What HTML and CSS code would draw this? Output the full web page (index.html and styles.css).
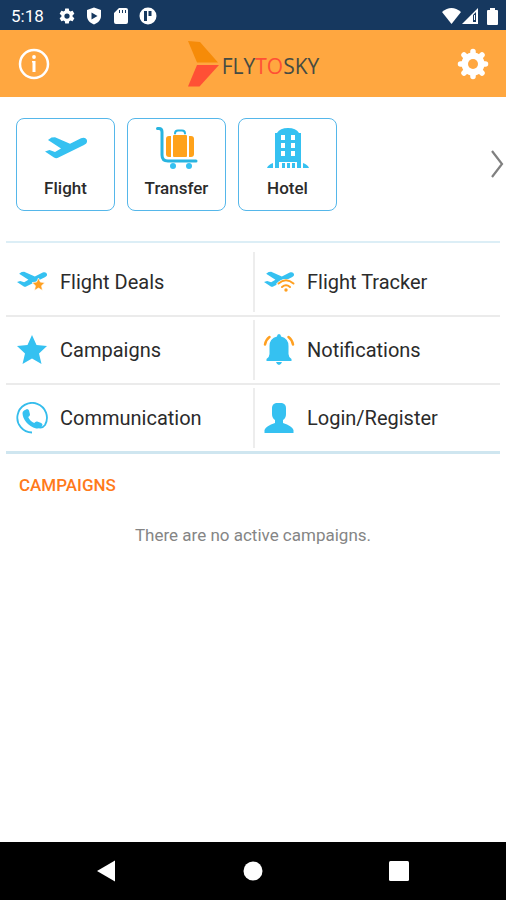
FILE: index.html
```html
<!DOCTYPE html>
<html lang="en">
<head>
<meta charset="utf-8">
<meta name="viewport" content="width=device-width, initial-scale=1">
<title>FlyToSky</title>
<link rel="stylesheet" href="styles.css">
</head>
<body>
<svg class="defs" aria-hidden="true">
  <symbol id="plane" viewBox="0 0 42 22">
    <path d="M0 14.500 4.500 13 10 15 16 11.500 3 3 6.500.500 10 .200 25 6.800 36 1.200C39 0 41.500 1 42 3.500 42.300 6 41 7 39 8L13.500 20.500C12 21.500 10.500 21.500 9 20.500Z"/>
  </symbol>
</svg>
<div class="app">
  <div class="status">
    <span class="clock">5:18</span>
    <svg width="18" height="18" viewBox="0 0 24 24"><path fill-rule="evenodd" d="M19.430 12.980c.04-.32.07-.64.07-.98s-.03-.66-.07-.98l2.110-1.650c.19-.15.24-.42.12-.64l-2-3.460c-.12-.22-.39-.3-.61-.22l-2.490 1c-.52-.4-1.080-.73-1.690-.98l-.38-2.650A.49.490 0 0 0 14 2h-4c-.25 0-.46.180-.49.420l-.38 2.650c-.61.250-1.170.590-1.690.98l-2.490-1c-.23-.09-.49 0-.61.220l-2 3.460c-.13.220-.07.490.12.640l2.110 1.650c-.04.320-.07.650-.07.980s.03.660.07.980l-2.110 1.650c-.19.150-.24.420-.12.640l2 3.460c.12.220.39.300.61.220l2.490-1c.52.400 1.080.730 1.690.980l.38 2.650c.03.240.24.420.49.420h4c.25 0 .46-.18.49-.42l.38-2.650c.61-.25 1.170-.59 1.690-.98l2.490 1c.23.090.49 0 .61-.22l2-3.460c.12-.22.070-.49-.12-.64zM12 15.500a3.500 3.500 0 1 1 0-7 3.500 3.500 0 0 1 0 7z"/></svg>
    <svg width="18" height="18" viewBox="0 0 18 18"><path fill-rule="evenodd" d="M9 .500 16 3v6c0 4-3 7-7 8.500C5 16 2 13 2 9V3ZM6.500 5.500v7l6-3.500Z"/></svg>
    <svg width="18" height="18" viewBox="0 0 18 18"><path fill-rule="evenodd" d="M7 1h7a2 2 0 0 1 2 2v12a2 2 0 0 1-2 2H4a2 2 0 0 1-2-2V6ZM7 3v3h1V3ZM10 3v3h1V3ZM13 3v3h1V3Z"/></svg>
    <svg width="18" height="18" viewBox="0 0 18 18"><path fill-rule="evenodd" d="M9 .500a8.500 8.500 0 1 1 0 17A8.500 8.500 0 0 1 9 .500ZM5 4v10h3V4ZM9.500 4v5h3V4Z"/></svg>
    <span class="signals">
      <svg width="19" height="16" viewBox="0 0 19 16"><path d="M0 4Q9.500-4 19 4L9.500 16Z"/></svg>
      <svg width="16" height="16" viewBox="0 0 16 16"><path fill-rule="evenodd" d="M16 0v16H0ZM11 7v7h3V4Z"/><path d="M12 7h1v5h-1z"/></svg>
      <svg class="battery" width="11" height="17" viewBox="0 0 11 17"><path d="M3 0h5v2h2q1 0 1 1v13q0 1-1 1H1q-1 0-1-1V3q0-1 1-1h2Z"/></svg>
    </span>
  </div>

  <header class="header">
    <button class="icon-btn" aria-label="Information">
      <svg width="32" height="32" viewBox="0 0 32 32"><circle cx="16" cy="16" r="14" fill="none" stroke="#fff" stroke-width="2.500"/><circle cx="16" cy="9" r="1.900"/><path d="M14 13h3.500v11h-3v-9.500H14Z"/></svg>
    </button>
    <h1 class="brand">
      <svg width="31" height="46" viewBox="0 0 31 46" aria-hidden="true"><path fill="#f68b08" d="M0 0 12 1 30 21.500H9Z"/><path fill="#ff5035" d="M9 24H31L11.500 45.500H0Z"/></svg>
      <span class="name">FLY<span class="to">TO</span>SKY</span>
    </h1>
    <button class="icon-btn" aria-label="Settings">
      <svg width="32" height="32" viewBox="0 0 32 32"><g stroke="#fff" stroke-width="5.500" stroke-linecap="round"><path d="M16 3.500v25M3.500 16h25M7 7l18 18M25 7 7 25"/></g><circle cx="16" cy="16" r="11.500"/><circle cx="16" cy="16" r="5" fill="#ffa740"/></svg>
    </button>
  </header>

  <main>
    <nav class="services" aria-label="Services">
      <button class="tile">
        <svg width="48" height="44" viewBox="0 0 48 44" aria-hidden="true"><use href="#plane" x="3" y="11" width="42" height="22"/></svg>
        <span>Flight</span>
      </button>
      <button class="tile">
        <svg width="48" height="44" viewBox="0 0 48 44" aria-hidden="true">
          <g fill="none" stroke="#28b4e0" stroke-linecap="round"><path stroke-width="3" d="M4.500 2.500H6Q9 2.500 9 6V29Q9 35 15 35H43"/><path stroke-width="2" d="M22 7.500q0-3 3-3h4q3 0 3 3"/></g>
          <g fill="#ffa21a"><path d="M18 10v21h-2q-3 0-3-3V13q0-3 3-3Z"/><rect x="20" y="9" width="14" height="22" rx="1"/><path d="M36 10h2q3 0 3 3v15q0 3-3 3h-2Z"/></g>
          <circle cx="20" cy="40" r="3"/><circle cx="36" cy="40" r="3"/>
        </svg>
        <span>Transfer</span>
      </button>
      <button class="tile">
        <svg width="48" height="44" viewBox="0 0 48 44" aria-hidden="true">
          <path fill-rule="evenodd" d="M11 7h2Q16 2 24 2t11 5h2v35h-4v-6H15v6h-4ZM17 9v5h4V9ZM27 9v5h4V9ZM17 17v5h4v-5ZM27 17v5h4v-5ZM17 25v5h4v-5ZM27 25v5h4v-5Z"/>
          <path d="M18 37h3v5h-3zM23 37h3v5h-3zM28 37h3v5h-3zM9 37v5H3q1-3 6-5ZM39 37v5h6q-1-3-6-5Z"/>
        </svg>
        <span>Hotel</span>
      </button>
      <button class="next" aria-label="More services">
        <svg width="14" height="30" viewBox="0 0 14 30"><path fill="none" stroke="#808080" stroke-width="2.200" d="M2 1 12 14 2 27"/></svg>
      </button>
    </nav>

    <nav class="menu" aria-label="Menu">
      <a href="#deals">
        <svg width="32" height="32" viewBox="0 0 32 32" aria-hidden="true"><use href="#plane" x="1" y="5" width="30" height="17"/><path fill="#ffa021" stroke="#fff" stroke-width=".700" d="m22.500 12 1.900 4.100 4.600.500-3.400 3.100.9 4.800-4-2.400-4 2.400.9-4.800-3.400-3.100 4.600-.500Z"/></svg>
        <span>Flight Deals</span>
      </a>
      <a href="#tracker">
        <svg width="32" height="32" viewBox="0 0 32 32" aria-hidden="true"><use href="#plane" x="1" y="5" width="30" height="17"/><path fill="#fff" d="M13 18Q22 8 32 18L23 28Z"/><g fill="none" stroke="#ffa021" stroke-width="2" stroke-linecap="round"><path d="M15.500 17.500q7.500-6.500 15 0M19 21q4-3.500 8 0"/></g><circle cx="23" cy="24" r="1.700" fill="#ffa021"/></svg>
        <span>Flight Tracker</span>
      </a>
      <a href="#campaigns">
        <svg width="32" height="32" viewBox="0 0 32 32" aria-hidden="true"><path d="m16 1 4.500 10L31 12l-8 7.500L25.500 30 16 24.500 6.500 30 9 19.500 1 12l10.500-1Z"/></svg>
        <span>Campaigns</span>
      </a>
      <a href="#notifications">
        <svg width="32" height="32" viewBox="0 0 32 32" aria-hidden="true"><path d="M16 0q2 0 2 2.500 7.500 2 7.500 9.500v8q0 3 3 5v2h-25v-2q3-2 3-5v-8q0-7.500 7.500-9.500Q14 0 16 0ZM13 28h6q-1 3-3 3t-3-3Z"/><g fill="none" stroke="#ffa021" stroke-width="2.500" stroke-linecap="round"><path d="M6.500 3Q3 5.500 2 10.500M25.500 3Q29 5.500 30 10.500"/></g></svg>
        <span>Notifications</span>
      </a>
      <a href="#communication">
        <svg width="32" height="32" viewBox="0 0 32 32" aria-hidden="true"><path fill="none" stroke="#35bdec" stroke-width="1.800" d="M16 30.500A14.800 14.800 0 1 1 29 23q-3 4-7 2"/><path d="M8 8.500 11 7q1.500 0 2 1.500l1 4q0 1.500-1.800 2.500 2 4.500 6 6 1.500-2 3-1.500l4 1.500q2 1 1 3-2 3-6 2.500C12 24.500 6.500 17 6.500 11q0-1.500 1.500-2.500Z"/></svg>
        <span>Communication</span>
      </a>
      <a href="#login">
        <svg width="32" height="32" viewBox="0 0 32 32" aria-hidden="true"><path d="M13 1h6q4 1 4 5v6q0 4-3 6v3q9 3 10.500 7v3h-29v-3Q3 24 12 21v-3q-3-2-3-6V6q0-4 4-5Z"/></svg>
        <span>Login/Register</span>
      </a>
    </nav>

    <section class="campaigns">
      <h2>CAMPAIGNS</h2>
      <p>There are no active campaigns.</p>
    </section>
  </main>

  <footer class="navbar">
    <button aria-label="Back"><svg width="22" height="22" viewBox="0 0 22 22"><path d="M20 .500v21L2 11Z"/></svg></button>
    <button aria-label="Home"><svg width="22" height="22" viewBox="0 0 22 22"><circle cx="11" cy="11" r="9.500"/></svg></button>
    <button aria-label="Recent apps"><svg width="22" height="22" viewBox="0 0 22 22"><rect x="1" y="1" width="20" height="20" rx="1.500"/></svg></button>
  </footer>
</div>
</body>
</html>
```
FILE: styles.css
```css
* {
  box-sizing: border-box;
}

body {
  margin: 0;
  background: #fff;
  color: #2b2b2b;
  font-family: Roboto, "Liberation Sans", sans-serif;
}

button {
  padding: 0;
  border: 0;
  background: none;
  color: inherit;
  font: inherit;
  cursor: pointer;
}

svg {
  display: block;
  flex: none;
  fill: currentColor;
}

.defs {
  position: absolute;
  width: 0;
  height: 0;
}

.app {
  display: flex;
  flex-direction: column;
  min-height: 100vh;
}

.status {
  display: flex;
  align-items: center;
  gap: 9px;
  height: 30px;
  padding: 2px 8px 0 11px;
  background: #16385f;
  color: #fff;
}

.clock {
  margin-right: 5px;
  font-size: 17px;
}

.signals {
  display: flex;
  align-items: center;
  gap: 1px;
  margin-left: auto;
}

.battery {
  margin-left: 8px;
}

.header {
  display: flex;
  align-items: center;
  justify-content: space-between;
  height: 67px;
  padding: 0 17px 0 18px;
  background: #ffa740;
  color: #fff;
}

.brand {
  display: flex;
  align-items: center;
  gap: 3px;
  margin: 0;
  color: #454b43;
  font-family: "Open Sans", "Noto Sans", sans-serif;
  font-size: 21px;
  font-weight: 400;
  line-height: 24px;
}

.name {
  padding-top: 4px;
}

.to {
  color: #ff5035;
}

main {
  flex: 1;
  padding: 0 6px;
}

.services {
  display: flex;
  align-items: center;
  gap: 12px;
  padding: 21px 0 30px 10px;
}

.tile {
  display: flex;
  flex-direction: column;
  align-items: center;
  gap: 8px;
  width: 99px;
  height: 93px;
  padding-top: 7px;
  border: 1px solid #55b7ea;
  border-radius: 8px;
  font-size: 17px;
  font-weight: 500;
  line-height: 20px;
}

.tile svg,
.menu svg {
  color: #35c1f1;
}

.next {
  margin: 0 -4px 0 auto;
}

.menu {
  display: grid;
  grid-template-columns: 1fr 1fr;
  padding-top: 6px;
  border-top: 2px solid #dceef6;
  border-bottom: 3px solid #cfe6f0;
}

.menu a {
  display: flex;
  align-items: center;
  gap: 12px;
  height: 68px;
  padding-left: 10px;
  border-bottom: 2px solid #ebebeb;
  color: inherit;
  font-size: 20px;
  line-height: 24px;
  text-decoration: none;
}

.menu a:nth-child(even) {
  background: linear-gradient(#ededed, #ededed) left center / 2px 60px no-repeat;
}

.menu a:nth-last-child(-n + 2) {
  height: 66px;
  border-bottom: 0;
}

.campaigns {
  padding: 20px 13px;
}

.campaigns h2 {
  margin: 0;
  color: #ff7a1a;
  font-size: 17px;
  font-weight: 500;
  line-height: 22px;
}

.campaigns p {
  margin: 28px 0 0;
  color: #858585;
  font-size: 17px;
  line-height: 22px;
  text-align: center;
}

.navbar {
  display: flex;
  align-items: center;
  justify-content: space-between;
  height: 58px;
  padding: 0 96px 0 95px;
  background: #000;
  color: #fff;
}
```
